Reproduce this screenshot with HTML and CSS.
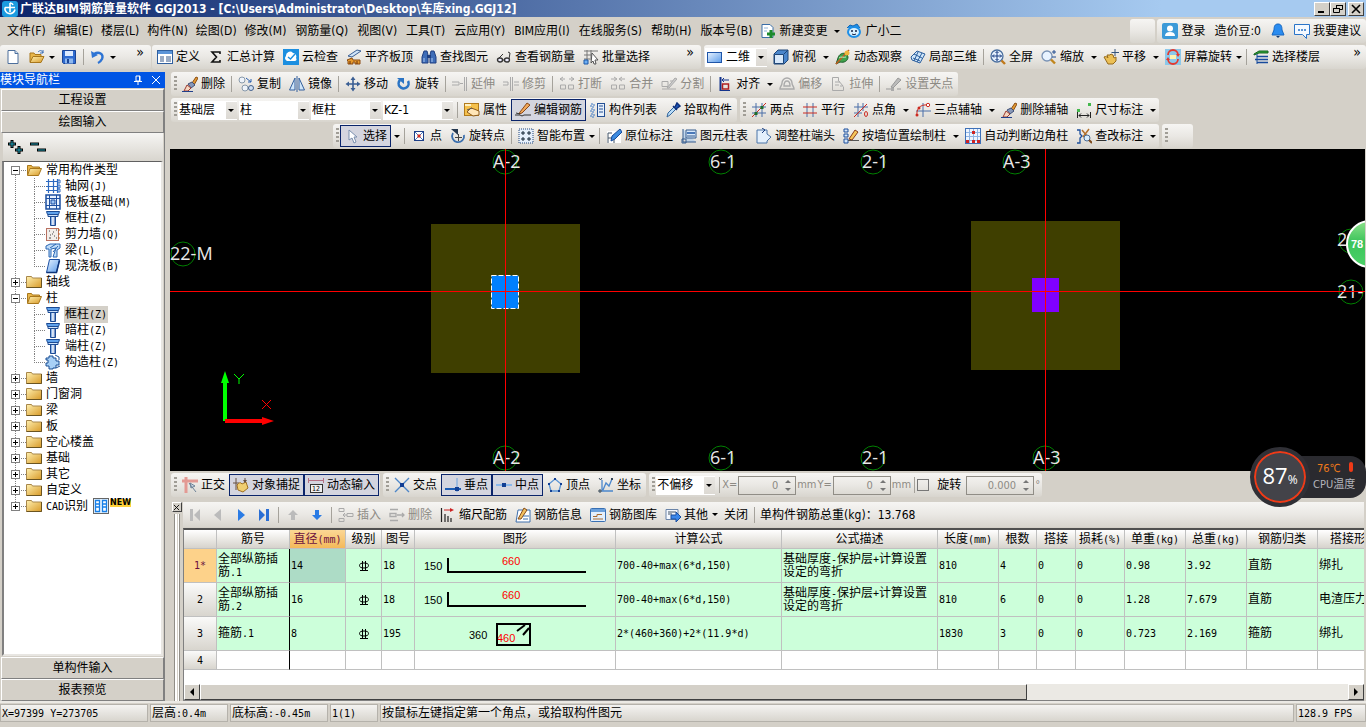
FILE: index.html
```html
<!DOCTYPE html>
<html lang="zh-CN">
<head>
<meta charset="utf-8">
<title>广联达BIM钢筋算量软件 GGJ2013</title>
<link rel="stylesheet" href="styles.css">
</head>
<body>
<svg class="defs" aria-hidden="true">
<defs>
<linearGradient id="gy" x1="0" y1="0" x2="1" y2="1"><stop offset="0" stop-color="#fff0b0"/><stop offset="1" stop-color="#d89a28"/></linearGradient>
<linearGradient id="gb" x1="0" y1="0" x2="1" y2="0"><stop offset="0" stop-color="#3a7fd8"/><stop offset=".5" stop-color="#fff"/><stop offset="1" stop-color="#1c4fa8"/></linearGradient>
<linearGradient id="gs" x1="0" y1="0" x2="1" y2="1"><stop offset="0" stop-color="#e8f3ff"/><stop offset="1" stop-color="#5a9bea"/></linearGradient>
</defs>
<symbol id="logo" viewBox="0 0 16 16"><rect width="16" height="16" rx="3" fill="#1c9be0"/><path d="M8 2v9M3 6.500h10M3 6.500a5 5 0 0 0 10 2M8 2a3 3 0 0 1 3 2" fill="none" stroke="#fff" stroke-width="1.600"/></symbol>
<symbol id="new" viewBox="0 0 16 16"><path d="M3 1.500h7l3 3v10H3z" fill="#fff" stroke="#4d6f9c"/><path d="M10 1.500v3h3" fill="#cfe0f4" stroke="#4d6f9c"/></symbol>
<symbol id="fopen" viewBox="0 0 16 16"><path d="M1.500 13V3.500h4l1 1.500h7v2" fill="#e8b64a" stroke="#a8771c"/><path d="M1.500 13.500L4 6.500h11.500l-3 7z" fill="url(#gy)" stroke="#a8771c"/></symbol>
<symbol id="openf" viewBox="0 0 16 16"><path d="M1 13V4h4l1 1.500h6v2" fill="#e8b64a" stroke="#a8771c"/><path d="M1 13.500L4 7.500h11l-3 6z" fill="url(#gy)" stroke="#a8771c"/><path d="M9 3c2-2 4-2 5 1m0-3v3h-3" fill="none" stroke="#3a6fb8"/></symbol>
<symbol id="fold" viewBox="0 0 16 16"><path d="M.500 13.500v-11h5l1 1.500h9v9.500z" fill="url(#gy)" stroke="#a8874a"/><path d="M15.500 4v9.500H.500" fill="none" stroke="#6b5420"/></symbol>
<symbol id="save" viewBox="0 0 16 16"><path d="M1.500 1.500h13v13h-12l-1-1z" fill="#2f6bd0" stroke="#1b4596"/><path d="M4 2h8v5H4z" fill="#dceaff"/><path d="M4 9.500h8v5H4z" fill="#8db7ee"/><path d="M6 10h2v4H6z" fill="#1b4596"/></symbol>
<symbol id="undo" viewBox="0 0 16 16"><path d="M4 5c5-3 10 0 8 5-1 2-2 3-4 4" fill="none" stroke="#2e74d4" stroke-width="2.400"/><path d="M1 2l1 7 6-3z" fill="#2e74d4"/></symbol>
<symbol id="define" viewBox="0 0 16 16"><rect x=".500" y="1.500" width="15" height="13" fill="#fff" stroke="#2f5f9f"/><path d="M1 2h14v3H1z" fill="#5b94d8"/><path d="M3 8h4M3 10h4M3 12h4M9 8h5M9 10h5M9 12h5" stroke="#37598a"/></symbol>
<symbol id="sigma" viewBox="0 0 16 16"><path d="M12 5V3H4l4.500 5L4 13h8v-2" fill="none" stroke="#111" stroke-width="1.600"/></symbol>
<symbol id="cloud" viewBox="0 0 16 16"><rect width="16" height="16" fill="#1c8fe0"/><path d="M4 12a3 3 0 0 1-1-5 4 4 0 0 1 7-3 3.500 3.500 0 0 1 3 5 2 2 0 0 1-1 3z" fill="#fff"/><path d="M5 8l2.500 2L12 5" fill="none" stroke="#1c8fe0" stroke-width="1.400"/></symbol>
<symbol id="level" viewBox="0 0 16 16"><path d="M2 7l9-6 4 1-9 6z" fill="#cfe3f8" stroke="#3a5f95"/><path d="M1 11l5-2 1 2h7v4H9v-2H7v2H2v-3z" fill="#e69a2c" stroke="#8b4b10"/><path d="M4 15v-3M11 15v-3" stroke="#6b2f08"/></symbol>
<symbol id="bino" viewBox="0 0 16 16"><path d="M3 2h3l1 4v8H1V8zM10 2h3l2 6v6H9V6z" fill="#3e6db8" stroke="#1f3f80"/><path d="M6 6h4v3H6z" fill="#1f3f80"/><path d="M3 9v4M11 9v4" stroke="#a9c8f0"/></symbol>
<symbol id="glass" viewBox="0 0 16 16"><ellipse cx="4" cy="11" rx="2.500" ry="2" fill="#eef" stroke="#333" stroke-width="1.400"/><ellipse cx="11" cy="11" rx="2.500" ry="2" fill="#eef" stroke="#333" stroke-width="1.400"/><path d="M6.500 11h2M2 10l5-5M13 10l1-6-2-1" fill="none" stroke="#333"/></symbol>
<symbol id="batch" viewBox="0 0 16 16"><path d="M1 2h14M1 6h9M1 10h8M4 1v14M8 1v8" stroke="#777" fill="none"/><path d="M1 11h4v4H1z" fill="#6fb0f4" stroke="#1c58a8"/><path d="M9 4l6 7h-3l1 4-2 0-1-3-2 2z" fill="#fff" stroke="#555"/></symbol>
<symbol id="rect2d" viewBox="0 0 16 16"><rect x=".500" y="3.500" width="14" height="10" fill="url(#gs)" stroke="#1f55a8"/></symbol>
<symbol id="cube" viewBox="0 0 16 16"><path d="M1 5l4-4h10v10l-4 4H1z" fill="#4a86cc" stroke="#1e4678"/><path d="M1.500 5.500h9v9h-9z" fill="#d7e8fa" stroke="#1e4678"/><path d="M11 5l4-4" stroke="#1e4678"/></symbol>
<symbol id="orbit" viewBox="0 0 16 16"><path d="M1 15L3 9c1-4 5-6 9-4l1 3c0 4-4 6-8 5z" fill="#3fa24c" stroke="#1c5d2a"/><path d="M1 15L14 1" stroke="#c65a20" stroke-width="1.500"/><circle cx="12" cy="4" r="2.500" fill="#f0b53c"/><path d="M4 9c2-2 5 0 7-1" stroke="#bff0c0" fill="none"/></symbol>
<symbol id="part3d" viewBox="0 0 16 16"><path d="M1 8l6-6 8 3-5 9-8-3z" fill="#cfe6fa" stroke="#2a5d9c"/><path d="M4 5l8 4M8 3l-4 9M12 4l-5 9M3 9l7 3" stroke="#2a5d9c" fill="none"/></symbol>
<symbol id="full" viewBox="0 0 16 16"><circle cx="7" cy="7" r="6" fill="#e8f3ff" stroke="#4a6f9f" stroke-width="1.300"/><path d="M7 2.500v9M2.500 7h9M5.500 4L7 2.500 8.500 4M5.500 10L7 11.500 8.500 10M4 5.500L2.500 7 4 8.500M10 5.500L11.500 7 10 8.500" fill="none" stroke="#173a80"/><path d="M11.500 11.500L15 15" stroke="#c07a1c" stroke-width="2.400"/></symbol>
<symbol id="zoom" viewBox="0 0 16 16"><circle cx="6" cy="7" r="5" fill="#e8f3ff" stroke="#7a93b5" stroke-width="1.300"/><path d="M10 10.500l4 4" stroke="#c0851c" stroke-width="2.400"/><path d="M11 3h4M13 1v4M11 8h4" stroke="#234c90"/></symbol>
<symbol id="pan" viewBox="0 0 16 16"><path d="M1 8c2-1 3 0 4 1L4 6l3 0 1-1 2 1 1 3 2-1 0 4-3 3H5z" fill="#ecc056" stroke="#956a1c"/><path d="M12 0v7M8.500 3.500H16" stroke="#35547c"/></symbol>
<symbol id="srot" viewBox="0 0 16 16"><rect width="16" height="16" fill="#8cc8ea"/><path d="M3 6a5 5 0 0 1 10 0M13 10a5 5 0 0 1-10 0" fill="none" stroke="#e5392e" stroke-width="1.800"/><path d="M5 6h6v4H5z" fill="#fff2b0"/><path d="M11 5h4l-2 3zM1 11h4L3 8z" fill="#e5392e"/></symbol>
<symbol id="floors" viewBox="0 0 16 16"><path d="M1 5l5-3h9v2H6L1 6z" fill="#2eaa3a" stroke="#176320"/><path d="M4 7.500h11M2 10.500h13M4 13.500h11" stroke="#174a9c" stroke-width="1.500"/><path d="M4 5v10" stroke="#174a9c"/></symbol>
<symbol id="brush" viewBox="0 0 16 16"><path d="M10 7l4-6 2 1-4 7z" fill="#e39a32" stroke="#8a4d12"/><path d="M6 8l4-2 3 3-4 3z" fill="#8898b8" stroke="#3e4f77"/><path d="M5 9l4 3-3 3H2z" fill="#f4d6c0" stroke="#9c3b30"/><path d="M0 15.500h11" stroke="#21408a"/></symbol>
<symbol id="copy" viewBox="0 0 16 16"><circle cx="4" cy="4" r="3" fill="#eef3fa" stroke="#8899aa"/><circle cx="7" cy="12" r="3" fill="#eef3fa" stroke="#8899aa"/><circle cx="13" cy="12" r="2.500" fill="#cfe0f4" stroke="#44618c"/><path d="M8 2l5 4m0-3v3h-3" fill="none" stroke="#2a60b0"/></symbol>
<symbol id="mirror" viewBox="0 0 16 16"><path d="M6 2v12H.500z" fill="#cfe6fa" stroke="#335f9c"/><path d="M10 2v12h5.500z" fill="#cfe6fa" stroke="#335f9c"/><path d="M8 0v16" stroke="#335f9c"/></symbol>
<symbol id="move" viewBox="0 0 16 16"><path d="M8 2v12M2 8h12" stroke="#3b5f94" stroke-width="1.600"/><path d="M5.500 4L8 .500 10.500 4zM5.500 12L8 15.500 10.500 12zM4 5.500L.500 8 4 10.500zM12 5.500L15.500 8 12 10.500z" fill="#3b5f94"/></symbol>
<symbol id="rot" viewBox="0 0 16 16"><path d="M4 4a5 5 0 1 0 8 1" fill="none" stroke="#2b74c4" stroke-width="2.600"/><path d="M1 2h7v6z" fill="#2b74c4"/></symbol>
<symbol id="ext" viewBox="0 0 16 16"><path d="M0 6h7v3H0M8 7.500h3M12.500 1v14M14.500 1v14" fill="none" stroke="#aaa"/></symbol>
<symbol id="trim" viewBox="0 0 16 16"><path d="M0 6h5v3H0M11 6h5M11 9h5M7.500 1v14M9.500 1v14" fill="none" stroke="#aaa"/></symbol>
<symbol id="brk" viewBox="0 0 16 16"><path d="M1 3h5M10 3h5M4 1L1 3l3 2M12 1l3 2-3 2M1.500 9h5v4h-5zM9.500 9h5v4h-5z" fill="none" stroke="#aaa"/></symbol>
<symbol id="mrg" viewBox="0 0 16 16"><path d="M1 3h5M10 3h5M4 1l3 2-3 2M12 1L9 3l3 2M1.500 9h5v4h-5zM9.500 9h5v4h-5z" fill="none" stroke="#aaa"/></symbol>
<symbol id="split" viewBox="0 0 16 16"><path d="M1 5.500h6v5H1zM1 13h14M9 5h4" fill="none" stroke="#aaa"/><path d="M6 12l8-10 2 1-8 9z" fill="#ccc" stroke="#aaa"/></symbol>
<symbol id="align" viewBox="0 0 16 16"><path d="M3.500 1v14" stroke="#15348c" stroke-width="2"/><path d="M5 4h7M5 4l2-2M5 4l2 2" stroke="#15348c" fill="none"/><path d="M5.500 8h6v5h-6z" fill="none" stroke="#b02020" stroke-width="1.500"/><path d="M4 14.500h9" stroke="#15348c"/></symbol>
<symbol id="offs" viewBox="0 0 16 16"><path d="M1 13c0-3 2-3 2-6a5 5 0 0 1 10 0c0 3 2 3 2 6zM5 10c0-3 1-5 3-5s3 2 3 5z" fill="none" stroke="#aaa" stroke-width="1.400"/></symbol>
<symbol id="strt" viewBox="0 0 16 16"><path d="M2.500 1.500h6v3M2.500 1.500v13h11v-4M5 6h5M5 9h4M8 4l5 6-3 0" fill="none" stroke="#aaa"/></symbol>
<symbol id="grip" viewBox="0 0 16 16"><path d="M0 13h5M11 13h4" stroke="#999"/><path d="M5 11l7-9 3 2-8 8z" fill="#bbb" stroke="#999"/><rect x="5" y="12" width="3" height="3" fill="#aaa"/></symbol>
<symbol id="prop" viewBox="0 0 16 16"><rect x=".500" y="1.500" width="14" height="12" fill="#f4c04c" stroke="#b27a1a"/><path d="M1 2h6v2H1z" fill="#fff0c0"/><path d="M3 10l4-4 3 1 5 2v4l-6 1z" fill="#ffe6b8" stroke="#8c5a1c"/><path d="M3 8l5-2" stroke="#555"/></symbol>
<symbol id="edit" viewBox="0 0 16 16"><path d="M0 13h5l2 1 2-1h7" fill="none" stroke="#333"/><path d="M5 10l7-9 3 2-8 8-3 1z" fill="#f0a85a" stroke="#8b4a1a"/><path d="M1 11l4 1" stroke="#333"/></symbol>
<symbol id="list" viewBox="0 0 16 16"><path d="M1 2h3v3H1zM1 7h3v3H1zM1 12h3v3H1z" fill="none" stroke="#3a76c4" stroke-dasharray="2 1"/><rect x="7.500" y="1.500" width="7" height="13" fill="#e7f0fb" stroke="#234f94"/><path d="M9 4h4M9 7h4M9 10h4" stroke="#234f94"/></symbol>
<symbol id="pick" viewBox="0 0 16 16"><path d="M2 15l1-4 6-6 2 2-6 6z" fill="#b9dcf8" stroke="#34669c"/><path d="M8 4l4 4M10 5l2-4 3 3-4 3" fill="#1c56b8" stroke="#0d2f7c" stroke-width="1.500"/></symbol>
<symbol id="p2" viewBox="0 0 16 16"><path d="M5 1v14M11 1v14M1 5h14M1 11h14" stroke="#4a6ea8" fill="none"/><path d="M1 15L15 1" stroke="#cc2a20"/><path d="M3.500 10h3v3h-3zM9.500 4h3v3h-3z" fill="#1e6d2c"/></symbol>
<symbol id="par" viewBox="0 0 16 16"><path d="M5 1v14M11 1v14" stroke="#4a6ea8"/><path d="M1 5h14M1 11h14" stroke="#cc2a20"/></symbol>
<symbol id="pang" viewBox="0 0 16 16"><path d="M5 1v14M1 5h14M1 11h8M10 1v8" stroke="#4a6ea8" fill="none"/><path d="M1 15L14 2" stroke="#cc2a20"/><ellipse cx="13" cy="12" rx="1.500" ry="2.500" fill="none" stroke="#cc2a20"/></symbol>
<symbol id="p3" viewBox="0 0 16 16"><path d="M8 1v14M1 9h15" stroke="#4a6ea8"/><path d="M2 14C1 7 5 2 13 3" fill="none" stroke="#cc2a20"/><circle cx="13" cy="3" r="1.700" fill="#fff" stroke="#cc2a20"/><circle cx="4" cy="6" r="1.500" fill="#cc2a20"/><circle cx="2" cy="13" r="1.500" fill="#cc2a20"/></symbol>
<symbol id="dim" viewBox="0 0 16 16"><path d="M1 7h3v3H1zM12 1h3v3h-3z" fill="#43b84c"/><path d="M1.500 10v6M14.500 10v6M3 13.500h10M5 11.500l-2 2 2 2M11 11.500l2 2-2 2" fill="none" stroke="#222"/></symbol>
<symbol id="cur" viewBox="0 0 16 16"><path d="M5 2v10l3-2 2 5 2-1-2-5h3z" fill="#fff" stroke="#7a8fae"/></symbol>
<symbol id="pt" viewBox="0 0 16 16"><rect x="3.500" y="3.500" width="9" height="9" fill="#fff" stroke="#1d3f88"/><path d="M4 4l8 8M12 4l-8 8" stroke="#4a76bc"/><path d="M6.500 6.500h3v3h-3z" fill="#d02a20"/></symbol>
<symbol id="rpt" viewBox="0 0 16 16"><path d="M3 5a6 6 0 1 0 11 2" fill="none" stroke="#3b6fae" stroke-width="1.800"/><path d="M1 1h7v6z" fill="#25384f"/><path d="M8.500 6v7M5 9.500h7" stroke="#444"/></symbol>
<symbol id="smart" viewBox="0 0 16 16"><rect x="1" y="1" width="14" height="14" fill="#e6f0fc" stroke="#1f447c" stroke-dasharray="1 1"/><path d="M5 3v4M3 5h4M11 3v4M9 5h4M5 9v4M3 11h4M11 9v4M9 11h4" stroke="#123"/></symbol>
<symbol id="inplace" viewBox="0 0 16 16"><path d="M1 3h14v12H1z" fill="#fff"/><path d="M2 15V5h4M2 10h6v5" stroke="#456" fill="none"/><path d="M5 13l1-5 8-7 2 3-7 7z" fill="#3d8be0" stroke="#174a98"/></symbol>
<symbol id="coltab" viewBox="0 0 16 16"><path d="M2 1v13h13M1 11h4v4H1z" fill="#9bc6f2" fill-opacity=".5" stroke="#345a8c"/><path d="M5 2h10v8H5z" fill="#d8e8fa" stroke="#345a8c"/><path d="M6 4h8v2H6z" fill="#4a78b8"/><path d="M6 8h8" stroke="#345a8c"/></symbol>
<symbol id="colend" viewBox="0 0 16 16"><path d="M1 2h7l3 0v4l4 3-4 4v2H1z" fill="#e4f0fc" stroke="#4a74a8"/><path d="M6 0l3 2-3 3" fill="none" stroke="#1c3f80"/></symbol>
<symbol id="wallcol" viewBox="0 0 16 16"><path d="M1 1h4v3H1zM1 6h4v3H1zM1 11h4v4H1z" fill="#d5e6f8" stroke="#1d4f9c"/><path d="M5 12.500h11" stroke="#555"/><path d="M6 11l6-9 3 2-6 8z" fill="#f5c55a" stroke="#8a3c1a"/></symbol>
<symbol id="auto" viewBox="0 0 16 16"><rect x=".500" y=".500" width="15" height="15" fill="#eef5ff" stroke="#3d70b8"/><path d="M4.500 1v14M8.500 1v14M12.500 1v14M1 4.500h14M1 8.500h14M1 12.500h14" stroke="#8fb4e4"/><path d="M7 3h3v3H7zM1 12h3v3H1zM7 12h3v3H7zM12 12h3v3h-3z" fill="#cf2424"/></symbol>
<symbol id="chk" viewBox="0 0 16 16"><path d="M1 2h3v4l2 2-2 2v5H1" fill="none" stroke="#1d4f9c" stroke-width="1.300"/><path d="M6 2l5 6M13 1l-6 8" stroke="#b2702c" stroke-width="1.500"/><circle cx="11" cy="10" r="3" fill="#d8ecfc" stroke="#4a6d98"/><path d="M13 12l3 3" stroke="#7c4a1c" stroke-width="2"/></symbol>
<symbol id="chg" viewBox="0 0 16 16"><path d="M2 1.500h8l3 3v10H2z" fill="#fff" stroke="#3a6ea8"/><path d="M4 5h4M4 8h3" stroke="#8fb2d8"/><path d="M11 7v8M7 11h8" stroke="#1c8a2c" stroke-width="3"/></symbol>
<symbol id="face" viewBox="0 0 16 16"><ellipse cx="8" cy="9" rx="7" ry="6" fill="#1d8fe8"/><path d="M1 5l3-3 3 1 4-2 3 4" fill="#1d8fe8" stroke="#1466b4"/><ellipse cx="8" cy="9" rx="5" ry="4" fill="#d8f0ff"/><circle cx="6" cy="8" r="1" fill="#124"/><circle cx="10" cy="8" r="1" fill="#124"/><path d="M6 11q2 1.500 4 0" fill="none" stroke="#124"/></symbol>
<symbol id="user" viewBox="0 0 16 16"><rect width="16" height="16" rx="2" fill="#3c9ad8"/><circle cx="8" cy="5.500" r="3" fill="#fff"/><path d="M3 13q0-4 5-4t5 4z" fill="#fff"/></symbol>
<symbol id="bell" viewBox="0 0 16 16"><path d="M8 1c3 0 4 2 4 6l2 5H2l2-5c0-4 1-6 4-6z" fill="#2a8cf0" stroke="#1667c0"/><path d="M6 13h4l-2 2z" fill="#123a70"/></symbol>
<symbol id="msg" viewBox="0 0 16 16"><path d="M.500 1.500h15v10h-3v4l-4-4h-8z" fill="#f4f9ff" stroke="#2a74c8"/><path d="M4 7h2M7 7h2M10 7h2" stroke="#2a74c8" stroke-width="1.500"/></symbol>
<symbol id="axis" viewBox="0 0 16 16"><path d="M3.500 1v14M8.500 1v14M12.500 1v14M1 3.500h12M1 8.500h12M1 12.500h12" stroke="#2e6ac0" stroke-width="1.200"/><path d="M13 2h2v3h-2zM13 7h2v3h-2zM13 11h2v3h-2z" fill="#fff" stroke="#2e6ac0"/></symbol>
<symbol id="raft" viewBox="0 0 16 16"><path d="M1 1h14v14H1z" fill="#eaf3ff" stroke="#1d4fa0" stroke-width="1.500"/><path d="M4.500 1v14M11.500 1v14M1 4.500h14M1 11.500h14" stroke="#1d4fa0"/><path d="M6 6h4v4H6z" fill="#9cc4f4" stroke="#1d4fa0"/></symbol>
<symbol id="col" viewBox="0 0 16 16"><path d="M1.500 1.500h13l-1 3h-11z" fill="#5fa2ec" stroke="#1c4b94"/><path d="M3 4.500h10v2H3z" fill="#cfe4fb" stroke="#1c4b94"/><path d="M5.500 6.500h5v9h-5z" fill="url(#gb)" stroke="#1c4b94"/></symbol>
<symbol id="wall" viewBox="0 0 16 16"><rect x="1.500" y="2.500" width="12" height="12" fill="#f3eeea" stroke="#b87060"/><path d="M4 5h1M8 6h1M11 4h1M5 9h1M9 10h1M4 12h2M11 12h1M7 8h1" stroke="#444"/><path d="M13 4h2M13 8h2M13 12h2" stroke="#c86a20"/></symbol>
<symbol id="beam" viewBox="0 0 16 16"><path d="M1 4l4-2 10 0v4l-3 2v7H8l3-9-5 1v8H4V7H1z" fill="#bfdcf8" stroke="#2a66b4"/><path d="M5 6l6-4M8 10l5-6" stroke="#2a66b4"/></symbol>
<symbol id="slab" viewBox="0 0 16 16"><path d="M4.500 1.500h10l-3 13h-10z" fill="url(#gs)" stroke="#1b4fa4"/><path d="M1.500 14.500h10l3-12" fill="none" stroke="#0f3478" stroke-width="1.500"/></symbol>
<symbol id="ccol" viewBox="0 0 16 16"><path d="M4 2h4v2h3v3h3v4h-3v3H8v1H4v-3H1V9h2V6H1V4h3z" fill="#a8d0f6" stroke="#1b4f94"/><path d="M10 1l4 2v3M11 14l4-2" stroke="#1b4f94" fill="none"/></symbol>
<symbol id="ortho" viewBox="0 0 16 16"><path d="M0 4h16M4 0v16" stroke="#e39a94" stroke-width="3"/><path d="M7 6l7 9M8 6l1 5 4-2z" fill="#cfdbe6" stroke="#6d8196"/></symbol>
<symbol id="snap" viewBox="0 0 16 16"><path d="M3 1v12M0 6h6M12 1v5" stroke="#665040"/><path d="M4 8q3-4 5-1l4-2 2 6-5 4-5-2z" fill="#f0ce70" stroke="#a07020"/><path d="M10 3h4l-2 3z" fill="#665040"/></symbol>
<symbol id="xpt" viewBox="0 0 16 16"><path d="M1 1l14 14M15 1L1 15" stroke="#4d86c8" stroke-width="1.400"/><path d="M6 6h4v4H6z" fill="#123f94"/></symbol>
<symbol id="perp" viewBox="0 0 16 16"><path d="M0 12h16" stroke="#1d5db4" stroke-width="2"/><path d="M12 1v14" stroke="#6ba2e0"/><path d="M10 10h4v4h-4z" fill="#123f94"/></symbol>
<symbol id="mid" viewBox="0 0 16 16"><path d="M0 8h16" stroke="#8cb8ea" stroke-width="2"/><path d="M6 6h4v4H6z" fill="#123f94"/></symbol>
<symbol id="vtx" viewBox="0 0 16 16"><path d="M8 2l6 5-2 7H4L2 7z" fill="none" stroke="#5a94d4" stroke-width="1.300"/><path d="M7 1h2v2H7zM13 6h2v2h-2zM11 13h2v2h-2zM3 13h2v2H3zM1 6h2v2H1z" fill="#123f94"/></symbol>
<symbol id="coord" viewBox="0 0 16 16"><path d="M4 3v11h11M5 13l3-7 3 3 3-7" fill="none" stroke="#4a86cc" stroke-width="1.300"/><path d="M1 1l1.500 2L4 1M13 1l2 2M15 1l-2 2M1 13h2v2H1z" fill="none" stroke="#345"/></symbol>
<symbol id="first" viewBox="0 0 16 16"><path d="M3 2h3v12H3zM13 2v12L7 8z" fill="#bbb"/></symbol>
<symbol id="prev" viewBox="0 0 16 16"><path d="M11 2v12L4 8z" fill="#bbb"/></symbol>
<symbol id="next" viewBox="0 0 16 16"><path d="M5 2v12l7-6z" fill="#2a7be4"/></symbol>
<symbol id="last" viewBox="0 0 16 16"><path d="M3 2v12l6-6zM10 2h3v12h-3z" fill="#2a6ed4"/></symbol>
<symbol id="up" viewBox="0 0 16 16"><path d="M8 3l5 5h-3v5H6V8H3z" fill="#bbb"/></symbol>
<symbol id="down" viewBox="0 0 16 16"><path d="M8 13l5-5h-3V3H6v5H3z" fill="#2a7be4"/></symbol>
<symbol id="ins" viewBox="0 0 16 16"><path d="M1 1.500h5v3H1zM1 11.500h5v3H1zM9 6.500h6v3H9zM5 8h4M7 6L5 8l2 2" fill="none" stroke="#aaa"/></symbol>
<symbol id="del" viewBox="0 0 16 16"><path d="M1 2.500h8M1 6.500h6v3H1zM1 13.500h8M8 8h7M13 6l2 2-2 2" fill="none" stroke="#aaa" stroke-width="1.300"/></symbol>
<symbol id="scale" viewBox="0 0 16 16"><path d="M1.500 1v14M5 7v8M8 9v6M11 11v4" stroke="#222" stroke-width="1.200"/><path d="M4 3h8" stroke="#c22"/><path d="M10 1l4 2-4 2z" fill="#c22"/></symbol>
<symbol id="info" viewBox="0 0 16 16"><path d="M3 3h12v12H1z" fill="#fff" stroke="#3d6eac"/><path d="M3 12L9 1l3 2-6 9z" fill="#f2c060" stroke="#824b1a"/><path d="M8 9h6M8 12h5" stroke="#3d6eac"/></symbol>
<symbol id="lib" viewBox="0 0 16 16"><rect x=".500" y="1.500" width="15" height="13" rx="1" fill="#e4effb" stroke="#3870b4"/><path d="M1 2h14v3H1z" fill="#6ba0dc"/><path d="M3 9.500h4v-2h5M3 12h10" fill="none" stroke="#a86a30"/></symbol>
<symbol id="other" viewBox="0 0 16 16"><path d="M1 2.500h12v10H1z" fill="#f4f8ff" stroke="#6a84a8"/><path d="M3 5h8M3 7h4" stroke="#456"/><path d="M6 8h5V5l5 5-5 5v-3H6z" fill="#3a86ea" stroke="#1a4fa0"/></symbol>
</svg>

<header class="titlebar">
  <svg class="ic"><use href="#logo"/></svg>
  <h1>广联达BIM钢筋算量软件 GGJ2013 - [C:\Users\Administrator\Desktop\车库xing.GGJ12]</h1>
  <div class="winbtns">
    <button type="button" aria-label="最小化"><svg viewBox="0 0 12 10"><path d="M2 8h6" stroke="#000" stroke-width="2"/></svg></button>
    <button type="button" aria-label="还原"><svg viewBox="0 0 12 10"><path d="M4.500 4V1.500h6v4H8M4 1.500h7M1.500 4.500h6v4h-6zM1 4.500h7" fill="none" stroke="#000"/></svg></button>
    <button type="button" aria-label="关闭" class="gap"><svg viewBox="0 0 12 10"><path d="M2 1l8 8M10 1L2 9" stroke="#000" stroke-width="1.600"/></svg></button>
  </div>
</header>

<nav class="menubar">
  <div class="menus">
    <button type="button">文件(F)</button><button type="button">编辑(E)</button><button type="button">楼层(L)</button><button type="button">构件(N)</button><button type="button">绘图(D)</button><button type="button">修改(M)</button><button type="button">钢筋量(Q)</button><button type="button">视图(V)</button><button type="button">工具(T)</button><button type="button">云应用(Y)</button><button type="button">BIM应用(I)</button><button type="button">在线服务(S)</button><button type="button">帮助(H)</button><button type="button">版本号(B)</button>
  </div>
  <button type="button" class="tb"><svg class="ic"><use href="#chg"/></svg>新建变更</button><button type="button" class="dd" aria-label="新建变更选项"></button>
  <button type="button" class="tb"><svg class="ic"><use href="#face"/></svg>广小二</button>
  <div class="account">
    <div class="bar stub"></div>
    <div class="bar">
      <button type="button" class="tb"><svg class="ic"><use href="#user"/></svg>登录</button>
      <span class="beans">造价豆:0</span>
      <button type="button" class="tb" aria-label="通知"><svg class="ic"><use href="#bell"/></svg></button>
      <button type="button" class="tb"><svg class="ic"><use href="#msg"/></svg>我要建议</button>
    </div>
  </div>
</nav>

<div class="row main-tools">
  <div class="bar filebar">
    <button type="button" class="tb" aria-label="新建"><svg class="ic"><use href="#new"/></svg></button>
    <button type="button" class="tb" aria-label="打开"><svg class="ic"><use href="#openf"/></svg></button><button type="button" class="dd tight" aria-label="打开选项"></button>
    <button type="button" class="tb" aria-label="保存"><svg class="ic"><use href="#save"/></svg></button>
    <i class="sep"></i>
    <button type="button" class="tb" aria-label="撤销"><svg class="ic"><use href="#undo"/></svg></button><button type="button" class="dd tight" aria-label="撤销选项"></button>
    <button type="button" class="more">»</button>
  </div>
  <div class="bar defbar">
    <button type="button" class="tb"><svg class="ic"><use href="#define"/></svg>定义</button>
    <button type="button" class="tb"><svg class="ic"><use href="#sigma"/></svg>汇总计算</button>
    <button type="button" class="tb"><svg class="ic"><use href="#cloud"/></svg>云检查</button>
    <button type="button" class="tb"><svg class="ic"><use href="#level"/></svg>平齐板顶</button>
    <button type="button" class="tb"><svg class="ic"><use href="#bino"/></svg>查找图元</button>
    <button type="button" class="tb"><svg class="ic"><use href="#glass"/></svg>查看钢筋量</button>
    <button type="button" class="tb"><svg class="ic"><use href="#batch"/></svg>批量选择</button>
    <button type="button" class="more">»</button>
  </div>
  <div class="bar viewbar">
    <label class="sel w62"><svg class="ic"><use href="#rect2d"/></svg><select aria-label="视图维度"><option>二维</option></select></label>
    <button type="button" class="tb"><svg class="ic"><use href="#cube"/></svg>俯视</button><button type="button" class="dd" aria-label="俯视选项"></button>
    <button type="button" class="tb"><svg class="ic"><use href="#orbit"/></svg>动态观察</button>
    <button type="button" class="tb"><svg class="ic"><use href="#part3d"/></svg>局部三维</button>
    <i class="sep"></i>
    <button type="button" class="tb"><svg class="ic"><use href="#full"/></svg>全屏</button>
    <button type="button" class="tb"><svg class="ic"><use href="#zoom"/></svg>缩放</button><button type="button" class="dd" aria-label="缩放选项"></button>
    <button type="button" class="tb"><svg class="ic"><use href="#pan"/></svg>平移</button><button type="button" class="dd" aria-label="平移选项"></button>
    <button type="button" class="tb"><svg class="ic"><use href="#srot"/></svg>屏幕旋转</button><button type="button" class="dd tight" aria-label="屏幕旋转选项"></button>
    <i class="sep"></i>
    <button type="button" class="tb"><svg class="ic"><use href="#floors"/></svg>选择楼层</button>
    <button type="button" class="more">»</button>
  </div>
</div>

<div class="workspace">
  <aside class="sidebar">
    <div class="side-title"><span>模块导航栏</span>
      <button type="button" aria-label="固定"><svg viewBox="0 0 10 10"><path d="M3 1h4v5H3zM1 6.500h8M5 6v4M6.500 1v5" fill="none" stroke="#fff"/></svg></button>
      <button type="button" aria-label="关闭导航栏"><svg viewBox="0 0 10 10"><path d="M1 1l8 8M9 1L1 9" stroke="#fff"/></svg></button>
    </div>
    <button type="button" class="sect">工程设置</button>
    <button type="button" class="sect">绘图输入</button>
    <div class="side-tools">
      <button type="button" aria-label="全部展开"><svg viewBox="0 0 16 16"><path d="M5 1v8M1 5h8M12 7v8M8 11h8" stroke="#000" stroke-width="3"/><path d="M5 2v6M2 5h6M12 8v6M9 11h6" stroke="#20a0b8"/></svg></button>
      <button type="button" aria-label="全部折叠"><svg viewBox="0 0 16 16"><path d="M0 5h9M7 11h9" stroke="#000" stroke-width="3"/><path d="M1 5h7M8 11h7" stroke="#20a0b8"/></svg></button>
    </div>
    <ul class="tree">
      <li><div class="node"><i class="tg minus"></i><svg class="ic"><use href="#fopen"/></svg><span>常用构件类型</span></div>
        <ul>
          <li class="node"><svg class="ic"><use href="#axis"/></svg><span>轴网<b>(J)</b></span></li>
          <li class="node"><svg class="ic"><use href="#raft"/></svg><span>筏板基础<b>(M)</b></span></li>
          <li class="node"><svg class="ic"><use href="#col"/></svg><span>框柱<b>(Z)</b></span></li>
          <li class="node"><svg class="ic"><use href="#wall"/></svg><span>剪力墙<b>(Q)</b></span></li>
          <li class="node"><svg class="ic"><use href="#beam"/></svg><span>梁<b>(L)</b></span></li>
          <li class="node"><svg class="ic"><use href="#slab"/></svg><span>现浇板<b>(B)</b></span></li>
        </ul></li>
      <li><div class="node"><i class="tg"></i><svg class="ic"><use href="#fold"/></svg><span>轴线</span></div></li>
      <li><div class="node"><i class="tg minus"></i><svg class="ic"><use href="#fopen"/></svg><span>柱</span></div>
        <ul>
          <li class="node"><svg class="ic"><use href="#col"/></svg><span class="cursel">框柱<b>(Z)</b></span></li>
          <li class="node"><svg class="ic"><use href="#col"/></svg><span>暗柱<b>(Z)</b></span></li>
          <li class="node"><svg class="ic"><use href="#col"/></svg><span>端柱<b>(Z)</b></span></li>
          <li class="node"><svg class="ic"><use href="#ccol"/></svg><span>构造柱<b>(Z)</b></span></li>
        </ul></li>
      <li><div class="node"><i class="tg"></i><svg class="ic"><use href="#fold"/></svg><span>墙</span></div></li>
      <li><div class="node"><i class="tg"></i><svg class="ic"><use href="#fold"/></svg><span>门窗洞</span></div></li>
      <li><div class="node"><i class="tg"></i><svg class="ic"><use href="#fold"/></svg><span>梁</span></div></li>
      <li><div class="node"><i class="tg"></i><svg class="ic"><use href="#fold"/></svg><span>板</span></div></li>
      <li><div class="node"><i class="tg"></i><svg class="ic"><use href="#fold"/></svg><span>空心楼盖</span></div></li>
      <li><div class="node"><i class="tg"></i><svg class="ic"><use href="#fold"/></svg><span>基础</span></div></li>
      <li><div class="node"><i class="tg"></i><svg class="ic"><use href="#fold"/></svg><span>其它</span></div></li>
      <li><div class="node"><i class="tg"></i><svg class="ic"><use href="#fold"/></svg><span>自定义</span></div></li>
      <li><div class="node"><i class="tg"></i><svg class="ic"><use href="#fold"/></svg><span><b>CAD</b>识别</span><svg class="ic cad" viewBox="0 0 16 16"><rect x=".500" y=".500" width="15" height="15" fill="#e8f4ff" stroke="#666"/><path d="M2.500 2.500h4v11h-4zM9.500 2.500h4v11h-4zM3 6h3M3 9h3M10 6h3M10 9h3" fill="#fff" stroke="#1880e8" stroke-width="1.300"/></svg><em>NEW</em></div></li>
    </ul>
    <button type="button" class="sect">单构件输入</button>
    <button type="button" class="sect">报表预览</button>
  </aside>

  <main class="stage">
    <div class="row">
      <div class="bar">
        <i class="grip"></i>
        <button type="button" class="tb"><svg class="ic"><use href="#brush"/></svg>删除</button>
        <i class="sep"></i>
        <button type="button" class="tb"><svg class="ic"><use href="#copy"/></svg>复制</button>
        <button type="button" class="tb"><svg class="ic"><use href="#mirror"/></svg>镜像</button>
        <i class="sep"></i>
        <button type="button" class="tb"><svg class="ic"><use href="#move"/></svg>移动</button>
        <button type="button" class="tb"><svg class="ic"><use href="#rot"/></svg>旋转</button>
        <i class="sep"></i>
        <button type="button" class="tb" disabled><svg class="ic"><use href="#ext"/></svg>延伸</button>
        <button type="button" class="tb" disabled><svg class="ic"><use href="#trim"/></svg>修剪</button>
        <i class="sep"></i>
        <button type="button" class="tb" disabled><svg class="ic"><use href="#brk"/></svg>打断</button>
        <button type="button" class="tb" disabled><svg class="ic"><use href="#mrg"/></svg>合并</button>
        <button type="button" class="tb" disabled><svg class="ic"><use href="#split"/></svg>分割</button>
        <i class="sep"></i>
        <button type="button" class="tb"><svg class="ic"><use href="#align"/></svg>对齐</button><button type="button" class="dd" aria-label="对齐选项"></button>
        <button type="button" class="tb" disabled><svg class="ic"><use href="#offs"/></svg>偏移</button>
        <button type="button" class="tb" disabled><svg class="ic"><use href="#strt"/></svg>拉伸</button>
        <i class="sep"></i>
        <button type="button" class="tb" disabled><svg class="ic"><use href="#grip"/></svg>设置夹点</button>
      </div>
    </div>
    <div class="row">
      <div class="bar">
        <i class="grip"></i>
        <label class="sel w59"><select aria-label="楼层"><option>基础层</option></select></label>
        <label class="sel w69"><select aria-label="构件类别"><option>柱</option></select></label>
        <label class="sel w69"><select aria-label="构件类型"><option>框柱</option></select></label>
        <label class="sel w69"><select aria-label="构件名称"><option>KZ-1</option></select></label>
        <i class="sep"></i>
        <button type="button" class="tb"><svg class="ic"><use href="#prop"/></svg>属性</button>
        <button type="button" class="tb on"><svg class="ic"><use href="#edit"/></svg>编辑钢筋</button>
        <button type="button" class="tb"><svg class="ic"><use href="#list"/></svg>构件列表</button>
        <button type="button" class="tb"><svg class="ic"><use href="#pick"/></svg>拾取构件</button>
      </div>
      <div class="bar">
        <i class="grip"></i>
        <button type="button" class="tb"><svg class="ic"><use href="#p2"/></svg>两点</button>
        <button type="button" class="tb"><svg class="ic"><use href="#par"/></svg>平行</button>
        <button type="button" class="tb"><svg class="ic"><use href="#pang"/></svg>点角</button><button type="button" class="dd" aria-label="点角选项"></button>
        <button type="button" class="tb"><svg class="ic"><use href="#p3"/></svg>三点辅轴</button><button type="button" class="dd" aria-label="三点辅轴选项"></button>
        <button type="button" class="tb"><svg class="ic"><use href="#brush"/></svg>删除辅轴</button>
        <button type="button" class="tb"><svg class="ic"><use href="#dim"/></svg>尺寸标注</button><button type="button" class="dd" aria-label="尺寸标注选项"></button>
      </div>
    </div>
    <div class="row draw-tools">
      <div class="bar">
        <i class="grip"></i>
        <button type="button" class="tb on"><svg class="ic"><use href="#cur"/></svg>选择</button><button type="button" class="dd" aria-label="选择方式"></button>
        <i class="sep"></i>
        <button type="button" class="tb"><svg class="ic"><use href="#pt"/></svg>点</button>
        <button type="button" class="tb"><svg class="ic"><use href="#rpt"/></svg>旋转点</button>
        <i class="sep"></i>
        <button type="button" class="tb"><svg class="ic"><use href="#smart"/></svg>智能布置</button><button type="button" class="dd tight" aria-label="智能布置选项"></button>
        <i class="sep"></i>
        <button type="button" class="tb"><svg class="ic"><use href="#inplace"/></svg>原位标注</button>
        <button type="button" class="tb"><svg class="ic"><use href="#coltab"/></svg>图元柱表</button>
        <button type="button" class="tb"><svg class="ic"><use href="#colend"/></svg>调整柱端头</button>
        <button type="button" class="tb"><svg class="ic"><use href="#wallcol"/></svg>按墙位置绘制柱</button><button type="button" class="dd" aria-label="绘制柱选项"></button>
        <button type="button" class="tb"><svg class="ic"><use href="#auto"/></svg>自动判断边角柱</button>
        <button type="button" class="tb"><svg class="ic"><use href="#chk"/></svg>查改标注</button><button type="button" class="dd" aria-label="查改标注选项"></button>
      </div>
      <div class="bar stub"><i class="grip"></i></div>
    </div>

    <div class="canvas">
      <svg class="plan" role="img" aria-label="柱平面图">
        <rect x="261" y="75" width="149" height="149" fill="#3f3f00"/>
        <rect x="801" y="72" width="149" height="149" fill="#3f3f00"/>
        <rect x="321.500" y="126.500" width="27" height="33" fill="#0080ff" stroke="#fff" stroke-dasharray="5 2"/>
        <rect x="862" y="129" width="27" height="34" fill="#8000ff"/>
        <g fill="none" stroke="#008000">
          <circle cx="335" cy="13" r="12"/><circle cx="551" cy="13" r="12"/><circle cx="703" cy="13" r="12"/><circle cx="845" cy="13" r="12"/>
          <circle cx="335" cy="309" r="12"/><circle cx="551" cy="309" r="12"/><circle cx="703" cy="309" r="12"/><circle cx="875" cy="309" r="12"/>
          <circle cx="13" cy="105" r="12"/><circle cx="1181" cy="92" r="12"/><circle cx="1181" cy="143" r="12"/>
        </g>
        <g class="marks">
          <text x="323" y="19">A-2</text><text x="540" y="19">6-1</text><text x="692" y="19">2-1</text><text x="833" y="19">A-3</text>
          <text x="323" y="315">A-2</text><text x="540" y="315">6-1</text><text x="692" y="315">2-1</text><text x="863" y="315">A-3</text>
          <text x="0" y="111">22-M</text><text x="1167" y="97">2</text><text x="1167" y="149">21-</text>
        </g>
        <path d="M335.500 0v322M875.500 0v322M0 142.500h1196" stroke="#f00" fill="none"/>
        <path d="M55 272v-42" stroke="#0f0" stroke-width="4"/><path d="M51 234l4-12 4 12z" fill="#0f0"/>
        <path d="M55 272h42" stroke="#f00" stroke-width="4"/><path d="M92 268l12 4-12 4z" fill="#f00"/>
        <path d="M64 225l5 5 5-5M69 230v5" fill="none" stroke="#0f0"/><path d="M92 251l9 9M101 251l-9 9" stroke="#f00"/>
      </svg>
      <div class="ball">78</div>
    </div>

    <div class="row snap-tools">
      <div class="bar">
        <i class="grip"></i>
        <button type="button" class="tb"><svg class="ic"><use href="#ortho"/></svg>正交</button>
        <button type="button" class="tb on"><svg class="ic"><use href="#snap"/></svg>对象捕捉</button>
        <button type="button" class="tb on"><svg class="ic" viewBox="0 0 16 16"><path d="M0 3.500h16M.500 1v5M15.500 1v5" stroke="#b47084"/><rect x="2.500" y="7.500" width="12" height="8" fill="#f0f0f0" stroke="#333"/><text x="4" y="14" font-size="7">12</text></svg>动态输入</button>
      </div>
      <div class="bar">
        <i class="grip"></i>
        <button type="button" class="tb"><svg class="ic"><use href="#xpt"/></svg>交点</button>
        <button type="button" class="tb on"><svg class="ic"><use href="#perp"/></svg>垂点</button>
        <button type="button" class="tb on"><svg class="ic"><use href="#mid"/></svg>中点</button>
        <button type="button" class="tb"><svg class="ic"><use href="#vtx"/></svg>顶点</button>
        <button type="button" class="tb"><svg class="ic"><use href="#coord"/></svg>坐标</button>
      </div>
      <div class="bar offsets">
        <i class="grip"></i>
        <label class="sel w59"><select aria-label="偏移方式"><option>不偏移</option></select></label>
        <i class="sep"></i>
        <label class="num">X=<span class="spin"><input type="text" value="0" disabled></span>mm</label>
        <label class="num">Y=<span class="spin"><input type="text" value="0" disabled></span>mm</label>
        <i class="sep"></i>
        <label class="check"><input type="checkbox">旋转</label>
        <label class="num"><span class="spin big"><input type="text" value="0.000" aria-label="旋转角度" disabled></span>°</label>
      </div>
    </div>

    <section class="rebar">
      <div class="handle"><button type="button" aria-label="关闭面板"><svg viewBox="0 0 8 8"><path d="M1 1l6 6M7 1L1 7" stroke="#000"/></svg></button><i></i></div>
      <div class="rebar-body">
        <div class="bar rebar-tools">
          <button type="button" class="tb nav" disabled aria-label="首行"><svg class="ic"><use href="#first"/></svg></button>
          <button type="button" class="tb nav" disabled aria-label="上一行"><svg class="ic"><use href="#prev"/></svg></button>
          <button type="button" class="tb nav" aria-label="下一行"><svg class="ic"><use href="#next"/></svg></button>
          <button type="button" class="tb nav" aria-label="末行"><svg class="ic"><use href="#last"/></svg></button>
          <i class="sep"></i>
          <button type="button" class="tb" disabled aria-label="上移"><svg class="ic"><use href="#up"/></svg></button>
          <button type="button" class="tb" aria-label="下移"><svg class="ic"><use href="#down"/></svg></button>
          <i class="sep"></i>
          <button type="button" class="tb" disabled><svg class="ic"><use href="#ins"/></svg>插入</button>
          <button type="button" class="tb" disabled><svg class="ic"><use href="#del"/></svg>删除</button>
          <button type="button" class="tb"><svg class="ic"><use href="#scale"/></svg>缩尺配筋</button>
          <button type="button" class="tb"><svg class="ic"><use href="#info"/></svg>钢筋信息</button>
          <button type="button" class="tb"><svg class="ic"><use href="#lib"/></svg>钢筋图库</button>
          <button type="button" class="tb"><svg class="ic"><use href="#other"/></svg>其他</button><button type="button" class="dd tight" aria-label="其他选项"></button>
          <button type="button" class="tb">关闭</button>
          <i class="sep"></i>
          <span class="total">单构件钢筋总重(kg)：13.768</span>
        </div>
        <div class="grid">
          <table>
            <colgroup><col class="c33"><col class="c73"><col class="c56"><col class="c36"><col class="c33"><col class="c201"><col class="c166"><col class="c156"><col class="c61"><col class="c38"><col class="c39"><col class="c49"><col class="c61"><col class="c61"><col class="c71"><col class="c73"></colgroup>
            <thead><tr><th></th><th>筋号</th><th class="hot">直径<b>(mm)</b></th><th>级别</th><th>图号</th><th>图形</th><th>计算公式</th><th>公式描述</th><th>长度<b>(mm)</b></th><th>根数</th><th>搭接</th><th>损耗<b>(%)</b></th><th>单重<b>(kg)</b></th><th>总重<b>(kg)</b></th><th>钢筋归类</th><th>搭接形式</th></tr></thead>
            <tbody>
              <tr><th class="cur"><b>1*</b></th><td>全部纵筋插筋<b>.1</b></td><td class="cell"><b>14</b></td><td class="lv"><svg viewBox="0 0 10 10"><ellipse cx="5" cy="4.500" rx="4.500" ry="2.500"/><path d="M3.500 0v9M6.500 0v9M1 9.500h8"/></svg></td><td><b>18</b></td><td class="fig"><svg viewBox="0 0 200 33"><text x="9" y="21">150</text><text x="87" y="16" class="r">660</text><path d="M33 9v14h138"/></svg></td><td><b>700-40+max(6*d,150)</b></td><td>基础厚度<b>-</b>保护层<b>+</b>计算设置设定的弯折</td><td><b>810</b></td><td><b>4</b></td><td><b>0</b></td><td><b>0</b></td><td><b>0.98</b></td><td><b>3.92</b></td><td>直筋</td><td>绑扎</td></tr>
              <tr><th><b>2</b></th><td>全部纵筋插筋<b>.2</b></td><td><b>16</b></td><td class="lv"><svg viewBox="0 0 10 10"><ellipse cx="5" cy="4.500" rx="4.500" ry="2.500"/><path d="M3.500 0v9M6.500 0v9M1 9.500h8"/></svg></td><td><b>18</b></td><td class="fig"><svg viewBox="0 0 200 33"><text x="9" y="21">150</text><text x="87" y="16" class="r">660</text><path d="M33 9v14h138"/></svg></td><td><b>700-40+max(6*d,150)</b></td><td>基础厚度<b>-</b>保护层<b>+</b>计算设置设定的弯折</td><td><b>810</b></td><td><b>6</b></td><td><b>0</b></td><td><b>0</b></td><td><b>1.28</b></td><td><b>7.679</b></td><td>直筋</td><td>电渣压力焊</td></tr>
              <tr><th><b>3</b></th><td>箍筋<b>.1</b></td><td><b>8</b></td><td class="lv"><svg viewBox="0 0 10 10"><ellipse cx="5" cy="4.500" rx="4.500" ry="2.500"/><path d="M3.500 0v9M6.500 0v9M1 9.500h8"/></svg></td><td><b>195</b></td><td class="fig"><svg viewBox="0 0 200 33"><text x="54" y="22">360</text><text x="82" y="25" class="r">460</text><path d="M82 7h33v21H82zM102 14l8-6M108 18l6-7"/></svg></td><td><b>2*(460+360)+2*(11.9*d)</b></td><td></td><td><b>1830</b></td><td><b>3</b></td><td><b>0</b></td><td><b>0</b></td><td><b>0.723</b></td><td><b>2.169</b></td><td>箍筋</td><td>绑扎</td></tr>
              <tr class="blank"><th><b>4</b></th><td></td><td></td><td></td><td></td><td></td><td></td><td></td><td></td><td></td><td></td><td></td><td></td><td></td><td></td><td></td></tr>
            </tbody>
          </table>
          <div class="hscroll"><button type="button" class="left" aria-label="向左滚动"></button><div class="track"><div class="thumb"></div></div><button type="button" class="right" aria-label="向右滚动"></button></div>
        </div>
      </div>
    </section>
  </main>
</div>

<footer class="status">
  <span class="s1"><b>X=97399 Y=273705</b></span><span class="s2">层高<b>:0.4m</b></span><span class="s3">底标高<b>:-0.45m</b></span><span class="s4"><b>1(1)</b></span><span class="s5">按鼠标左键指定第一个角点，或拾取构件图元</span><span class="s6"><b>128.9 FPS</b></span>
</footer>

<div class="monitor">
  <div class="dial"><strong>87</strong><small>%</small></div>
  <div class="temp"><p class="hotline">76℃ <i></i></p><p>CPU温度</p></div>
</div>
</body>
</html>
```

FILE: styles.css
```css
*{box-sizing:border-box}
html,body{margin:0;height:100%}
body{
  display:flex;flex-direction:column;position:relative;overflow:hidden;
  min-height:100vh;background:#d4d0c8;color:#000;
  font:12px/16px "DejaVu Sans Condensed","Noto Sans CJK SC",sans-serif;
}
button,input,select{font:inherit;color:inherit;margin:0}
button{background:none;border:0;padding:0}
b{font-family:"DejaVu Sans Mono","Noto Sans CJK SC",monospace;font-size:10px;font-weight:400}
ul{list-style:none;margin:0;padding:0}
.defs{position:absolute;width:0;height:0}
.ic{width:16px;height:16px;flex:none;display:block}

/* title and menu */
.titlebar{display:flex;align-items:center;height:17px;padding:0 2px;gap:2px;background:linear-gradient(90deg,#0a246a,#a6caf0 85%)}
.titlebar h1{margin:0;flex:1;color:#fff;font-size:12px;font-weight:700;line-height:16px;white-space:nowrap;overflow:hidden}
.winbtns{display:flex}
.winbtns button{width:16px;height:14px;background:#d4d0c8;border:1px solid;border-color:#fff #404040 #404040 #fff;display:flex;align-items:center;justify-content:center}
.winbtns .gap{margin-left:2px}
.winbtns svg{width:12px;height:10px}
.menubar{display:flex;align-items:center;height:28px;padding-left:3px;white-space:nowrap}
.menus{display:flex}
.menus button{padding:0 4px}
.menus button:nth-child(n+7){padding-left:5px}
.account{display:flex;margin-left:auto;gap:2px}
.beans{padding:0 5px}
.account .stub{width:25px}

/* toolbars */
.row{display:flex;align-items:flex-start;gap:3px;height:26px;flex:none}
.bar{display:flex;align-items:center;height:24px;padding:0 1px;border-radius:3px;background:linear-gradient(#f6f5f3,#eae8e4 50%,#d8d5ce);white-space:nowrap}
.tb{display:flex;align-items:center;gap:3px;height:22px;padding:0 4px}
.tb:disabled{color:#8d8a84}
.tb.on{padding:0 3px;border:1px solid #0a246a;background:#d4d5df}
.dd{width:11px;height:22px;display:flex;align-items:center;justify-content:center}
.dd::after,.sel::after{content:"";border:3px solid transparent;border-top-color:#000;border-bottom:0}
.dd.tight{width:8px;justify-content:flex-start}
.sep{width:1px;height:16px;margin:0 2px;background:#a5a29b;flex:none}
.grip{width:3px;height:16px;margin:0 1px 0 2px;flex:none;background:repeating-linear-gradient(#a09d96 0 2px,transparent 2px 4px)}
.more{align-self:flex-start;margin-left:auto;padding:0 6px;font-size:14px;line-height:14px}
.main-tools{height:27px}
.main-tools,.main-tools .bar{gap:0}
.filebar{width:151px}
.defbar{width:549px;margin-left:1px}
.viewbar{flex:1;margin-left:3px}
.viewbar .more{padding:0 4px}
.stage>.row{padding-left:1px}
.stage>.draw-tools{height:25px;margin-left:162px}
.stub{width:31px}
.sel{display:flex;align-items:center;height:19px;margin-right:2px;padding-right:3px;background:linear-gradient(#e8e6e2,#dcd9d3) right/11px 17px no-repeat #fff}
.sel select{flex:1;min-width:0;height:19px;padding:0 0 0 1px;border:0;background:none;appearance:none}
.sel .ic{margin:0 2px}
.w59{width:59px}.w62{width:62px}.w69{width:70px}

/* navigation */
.workspace{display:flex;flex:1;min-height:0}
.sidebar{display:flex;flex-direction:column;width:165px;flex:none;margin-right:5px;border-right:1px solid #808080}
.side-title{display:flex;align-items:center;gap:8px;height:16px;padding-right:4px;margin-right:-1px;background:#0055e5;color:#fff}
.side-title span{flex:1;line-height:15px}
.side-title button{display:flex}
.side-title svg{width:10px;height:10px}
.sect{height:22px;flex:none;margin-left:1px;border:1px solid;border-color:#fff #808080 #808080 #fff}
.side-title+.sect{margin-top:1px}
.side-tools{display:flex;align-items:center;gap:7px;height:28px;flex:none;margin:0 1px 0 3px;padding-left:4px;background:linear-gradient(#f6f5f3,#d8d5ce)}
.side-tools button,.side-tools svg{display:block;width:16px;height:16px}
.tree{flex:1;min-height:0;margin:0 1px 1px 2px;padding:0 0 0 6px;border:2px solid;border-width:1px 2px 2px;border-color:#606060 #e8e6e2 #e8e6e2 #808080;background:#fff}
.tree>li{position:relative}
.tree>li:not(:last-child)::before{content:"";position:absolute;left:5px;top:13px;bottom:-4px;border-left:1px dotted #808080}
.node{display:flex;align-items:center;height:16px;white-space:nowrap}
.tg{position:relative;width:9px;height:9px;margin:0 6px 0 1px;border:1px solid #808080;background:linear-gradient(#000,#000) center/5px 1px no-repeat,linear-gradient(#000,#000) center/1px 5px no-repeat,#fff}
.tg.minus{background:linear-gradient(#000,#000) center/5px 1px no-repeat,#fff}
.tg::after{content:"";position:absolute;left:9px;top:3px;width:5px;border-top:1px dotted #808080}
.node>span{padding:0 1px;margin-left:3px}
.tree ul{margin-left:24px}
.tree ul .node{position:relative;padding-left:11px}
.tree ul .node::before{content:"";position:absolute;left:0;top:0;width:10px;height:8px;border:dotted #808080;border-width:0 0 1px 1px}
.tree ul .node:not(:last-child)::after{content:"";position:absolute;left:0;top:8px;height:8px;border-left:1px dotted #808080}
.node .cursel{background:#d4d0c8}
.node .cad{margin-left:4px}
.node em{margin:0 0 6px 1px;color:#000;background:#ffd23a;font:700 8px/8px "DejaVu Sans",sans-serif}

/* drawing area */
.stage{display:flex;flex-direction:column;flex:1;min-width:0}
.canvas{position:relative;flex:1;min-height:0;margin-right:1px;background:#000;overflow:hidden}
.plan{display:block;width:100%;height:100%}
.marks{fill:#e8e8e8;font:18px "Open Sans",sans-serif}
.ball{position:absolute;right:-29px;top:71px;width:48px;height:48px;border:2px solid #fff;border-radius:50%;background:linear-gradient(#8be08a,#3cc45a 45%,#4bd068);color:#fff;font:700 11px/44px "Liberation Sans",sans-serif;padding-left:3px}
.stage>.snap-tools{height:31px;padding-top:2px}
.offsets{padding-right:2px}
.num{display:flex;align-items:center;gap:1px;margin-right:1px;color:#8d8a84;font-size:11px}
.num:last-child{margin-right:0}
.spin{position:relative;display:block;width:58px;height:19px;border:1px solid #908d86}
.spin.big{width:68px}
.spin input{width:100%;height:17px;padding:0 17px 0 0;border:0;background:none;text-align:right;color:#8d8a84}
.spin::before,.spin::after{content:"";position:absolute;right:4px;border:3px solid transparent}
.spin::before{top:0;border-bottom-color:#777}
.spin::after{bottom:0;border-top-color:#777}
.check{display:flex;align-items:center;gap:8px;margin:0 5px 0 0}
.check input{appearance:none;width:12px;height:12px;border:1px solid #777}

/* rebar panel */
.rebar{display:flex;flex:none}
.handle{display:flex;flex-direction:column;align-items:center;width:13px}
.handle button{display:flex;align-items:center;justify-content:center;width:10px;height:10px;border:1px solid;border-color:#fff #404040 #404040 #fff}
.handle svg{width:7px;height:7px}
.handle i{flex:1;width:6px;margin-top:2px;border:solid #908d86;border-width:0 1px;background:linear-gradient(90deg,#fff 2px,#d4d0c8 2px 3px,#fff 3px)}
.rebar-body{flex:1;min-width:0;margin-right:2px}
.rebar-tools{height:25px;border-radius:0}
.nav{padding:0 4px 0 3px}
.total{padding-left:3px}
.grid{margin-top:1px;border:1px solid #808080;border-top:2px solid #505050;border-right:0;background:#fff;overflow:hidden}
table{width:1207px;border-collapse:separate;border-spacing:0;table-layout:fixed}
.c33{width:33px}.c73{width:73px}.c56{width:56px}.c36{width:36px}.c201{width:201px}.c166{width:166px}.c156{width:156px}.c61{width:61px}.c38{width:38px}.c39{width:39px}.c49{width:49px}.c71{width:71px}
th,td{padding:0 1px;border:solid #c0c0c0;border-width:0 1px 1px 0;font-weight:400;white-space:nowrap;overflow:hidden}
thead th{height:19px;line-height:16px;text-align:center;background:linear-gradient(#fff,#ebe9e5 50%,#d6d3cc)}
thead .hot{background:linear-gradient(#fbd795,#f4b95a);color:#6b1040}
tbody th{background:linear-gradient(#fafaf9,#d8d5ce)}
tbody .cur{background:#fdd28a;color:#6b1040}
tbody td{height:34px;line-height:13px;background:#ccffda;text-align:left;white-space:normal}
td:nth-child(2){border-right-color:#000}
tbody .cell{background:#addcc6}
.blank td{height:19px;background:#fff}
.lv svg{display:block;width:10px;height:10px;margin:auto;fill:none;stroke:#000}
tbody .fig{padding:0}
.fig svg{display:block;width:200px;height:33px;fill:none;stroke:#000;stroke-width:2}
.fig text{fill:#000;stroke:none;font:11px "Liberation Sans",sans-serif}
.fig .r{fill:#f00}
.hscroll{display:flex;height:16px;margin-top:14px}
.hscroll button{width:16px;border:1px solid;border-color:#fff #404040 #404040 #fff;background:#d4d0c8;display:flex;align-items:center;justify-content:center}
.hscroll button::after{content:"";border:4px solid transparent}
.hscroll .left::after{border-right-color:#000;border-left:0}
.hscroll .right::after{border-left-color:#000;border-right:0}
.track{flex:1;background:#ebe9e4}
.thumb{width:72%;height:16px;border:1px solid;border-color:#fff #404040 #404040 #fff;background:#d4d0c8}

/* status bar */
.status{display:flex;gap:2px;height:26px;flex:none;padding:1px 0 5px;border-top:2px solid #ebe9e4;white-space:nowrap;overflow:hidden}
.status span{padding:0 1px;border:1px solid #b5b2ab;background:linear-gradient(#f4f3f1,#d8d5ce);line-height:16px}
.s1{width:148px}.s2{width:78px}.s3{width:98px}.s4{width:48px}.s5{flex:1}.s6{width:70px}

/* floating monitor */
.monitor{position:absolute;right:0;top:447px;display:flex;align-items:center;width:116px;height:60px}
.dial{position:relative;z-index:1;display:flex;align-items:baseline;justify-content:center;width:60px;height:60px;flex:none;border:4px solid #303036;border-radius:50%;background:#434349;box-shadow:inset 0 0 0 2px #f03a17;color:#fff;font-family:"Open Sans",sans-serif}
.dial strong{font-size:22px;font-weight:400;line-height:48px}
.dial small{font-size:12px}
.temp{flex:1;height:42px;margin-left:-16px;padding:5px 0 0 19px;border-radius:0 16px 16px 0;background:#2a2a2f;color:#b4b4bc;font-size:11px;white-space:nowrap}
.temp p{margin:0;line-height:16px}
.hotline{padding-left:4px;color:#f07a1a}
.hotline i{display:inline-block;width:4px;height:10px;margin-left:5px;background:#f03a17;border-radius:2px}
```
